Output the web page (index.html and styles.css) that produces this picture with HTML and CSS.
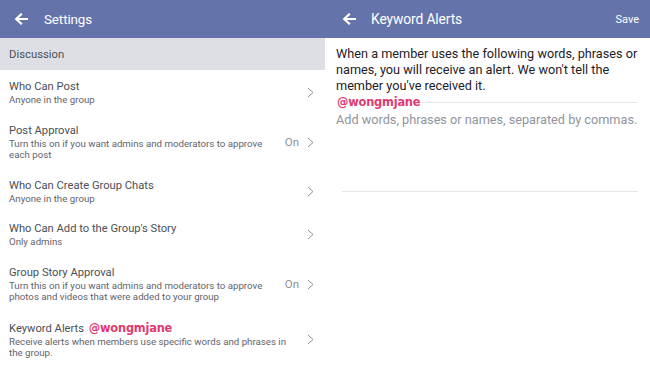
FILE: index.html
```html
<!DOCTYPE html>
<html>
<head>
<meta charset="utf-8">
<link rel="stylesheet" href="styles.css">
</head>
<body>
<div class="app">
  <section class="panel left">
    <header class="bar">
      <svg class="back" width="14" height="12" viewBox="0 0 14 12"><path d="M13 6H3M7 1.5L2.2 6L7 10.5" fill="none" stroke="#fff" stroke-width="2.2" stroke-linecap="square"/></svg>
      <span class="bar-title">Settings</span>
    </header>
    <div class="section-head">Discussion</div>
    <div class="row">
      <div class="row-text"><div class="row-title">Who Can Post</div><div class="row-sub">Anyone in the group</div></div>
      <div class="row-end"><svg class="chev" width="7" height="11" viewBox="0 0 7 11"><path d="M1 1L6 5.5L1 10" fill="none" stroke="#8d9097" stroke-width="1"/></svg></div>
    </div>
    <div class="row">
      <div class="row-text"><div class="row-title">Post Approval</div><div class="row-sub">Turn this on if you want admins and moderators to approve each post</div></div>
      <div class="row-end"><span class="state">On</span><svg class="chev" width="7" height="11" viewBox="0 0 7 11"><path d="M1 1L6 5.5L1 10" fill="none" stroke="#8d9097" stroke-width="1"/></svg></div>
    </div>
    <div class="row">
      <div class="row-text"><div class="row-title">Who Can Create Group Chats</div><div class="row-sub">Anyone in the group</div></div>
      <div class="row-end"><svg class="chev" width="7" height="11" viewBox="0 0 7 11"><path d="M1 1L6 5.5L1 10" fill="none" stroke="#8d9097" stroke-width="1"/></svg></div>
    </div>
    <div class="row">
      <div class="row-text"><div class="row-title">Who Can Add to the Group's Story</div><div class="row-sub">Only admins</div></div>
      <div class="row-end"><svg class="chev" width="7" height="11" viewBox="0 0 7 11"><path d="M1 1L6 5.5L1 10" fill="none" stroke="#8d9097" stroke-width="1"/></svg></div>
    </div>
    <div class="row">
      <div class="row-text"><div class="row-title">Group Story Approval</div><div class="row-sub">Turn this on if you want admins and moderators to approve photos and videos that were added to your group</div></div>
      <div class="row-end"><span class="state">On</span><svg class="chev" width="7" height="11" viewBox="0 0 7 11"><path d="M1 1L6 5.5L1 10" fill="none" stroke="#8d9097" stroke-width="1"/></svg></div>
    </div>
    <div class="row">
      <div class="row-text"><div class="row-title">Keyword Alerts <span class="wm wm-inline">@wongmjane</span></div><div class="row-sub">Receive alerts when members use specific words and phrases in the group.</div></div>
      <div class="row-end"><svg class="chev" width="7" height="11" viewBox="0 0 7 11"><path d="M1 1L6 5.5L1 10" fill="none" stroke="#8d9097" stroke-width="1"/></svg></div>
    </div>
  </section>
  <section class="panel right">
    <header class="bar">
      <svg class="back" width="14" height="12" viewBox="0 0 14 12"><path d="M13 6H3M7 1.5L2.2 6L7 10.5" fill="none" stroke="#fff" stroke-width="2.2" stroke-linecap="square"/></svg>
      <span class="bar-title">Keyword Alerts</span>
      <span class="save">Save</span>
    </header>
    <div class="content">
      <p class="desc">When a member uses the following words, phrases or names, you will receive an alert. We won't tell the member you've received it.</p>
      <div class="field">
        <span class="wm wm-over">@wongmjane</span>
        <div class="placeholder">Add words, phrases or names, separated by commas.</div>
      </div>
    </div>
  </section>
</div>
</body>
</html>
```
FILE: styles.css
```css
* { box-sizing: border-box; }
html, body { margin: 0; padding: 0; background: #fff; }
body { font-family: Roboto, "Noto Sans", sans-serif; width: 650px; height: 365px; overflow: hidden; }
.app { display: flex; height: 365px; overflow: hidden; }
.panel { display: flex; flex-direction: column; }
.panel > * { flex: none; }
.left { width: 326px; }
.right { flex: 1; }
.bar {
  height: 38px;
  background: #6474ab;
  display: flex;
  align-items: center;
  color: #fff;
}
.left .bar { padding-left: 14px; }
.right .bar { padding-left: 16px; padding-right: 11px; }
.back { flex: none; }
.bar-title { font-size: 13.8px; margin-left: 16px; letter-spacing: -0.1px; }
.left .bar-title { font-size: 13.4px; }
.right .bar-title { margin-left: 15px; }
.save { margin-left: auto; font-size: 11px; }
.section-head {
  height: 32px;
  width: 325px;
  background: #dedfe5;
  color: #4b4f56;
  font-size: 11.3px;
  display: flex;
  align-items: center;
  padding-left: 9px;
}
.row {
  display: flex;
  align-items: center;
  padding: 10px 12px 8px 9px;
}
.row-text { flex: 1; min-width: 0; padding-right: 8px; }
.row-title { font-size: 11.2px; line-height: 14px; color: #4b4f56; }
.row-sub { font-size: 9.7px; line-height: 11.5px; color: #5f636a; }
.row-end { display: flex; align-items: center; flex: none; }
.state { font-size: 11.5px; color: #8d9097; margin-right: 8px; }
.chev { display: block; }
.wm {
  font-family: "DejaVu Sans", Lato, sans-serif;
  font-weight: bold;
  color: #df3a73;
  font-size: 11.4px;
  letter-spacing: -0.2px;
}
.wm-inline { margin-left: 2px; }
.content { padding: 8px 12px 0 10px; }
.desc { margin: 0; font-size: 12.7px; line-height: 16px; color: #1d2129; }
.field {
  position: relative;
  margin-top: 8px;
  margin-left: 2px;
  border-top: 1px solid #e6e6ea;
  padding-top: 9px;
  height: 90px;
}
.field::after {
  content: "";
  position: absolute;
  left: 4px; right: 0; bottom: 0;
  border-bottom: 1px solid #e6e6ea;
}
.wm-over { position: absolute; left: -1px; top: -9px; background: #fff; padding-right: 1px; line-height: 16px; }
.placeholder { font-size: 12.7px; line-height: 16px; color: #90949c; margin-left: -2px; white-space: nowrap; }
```
